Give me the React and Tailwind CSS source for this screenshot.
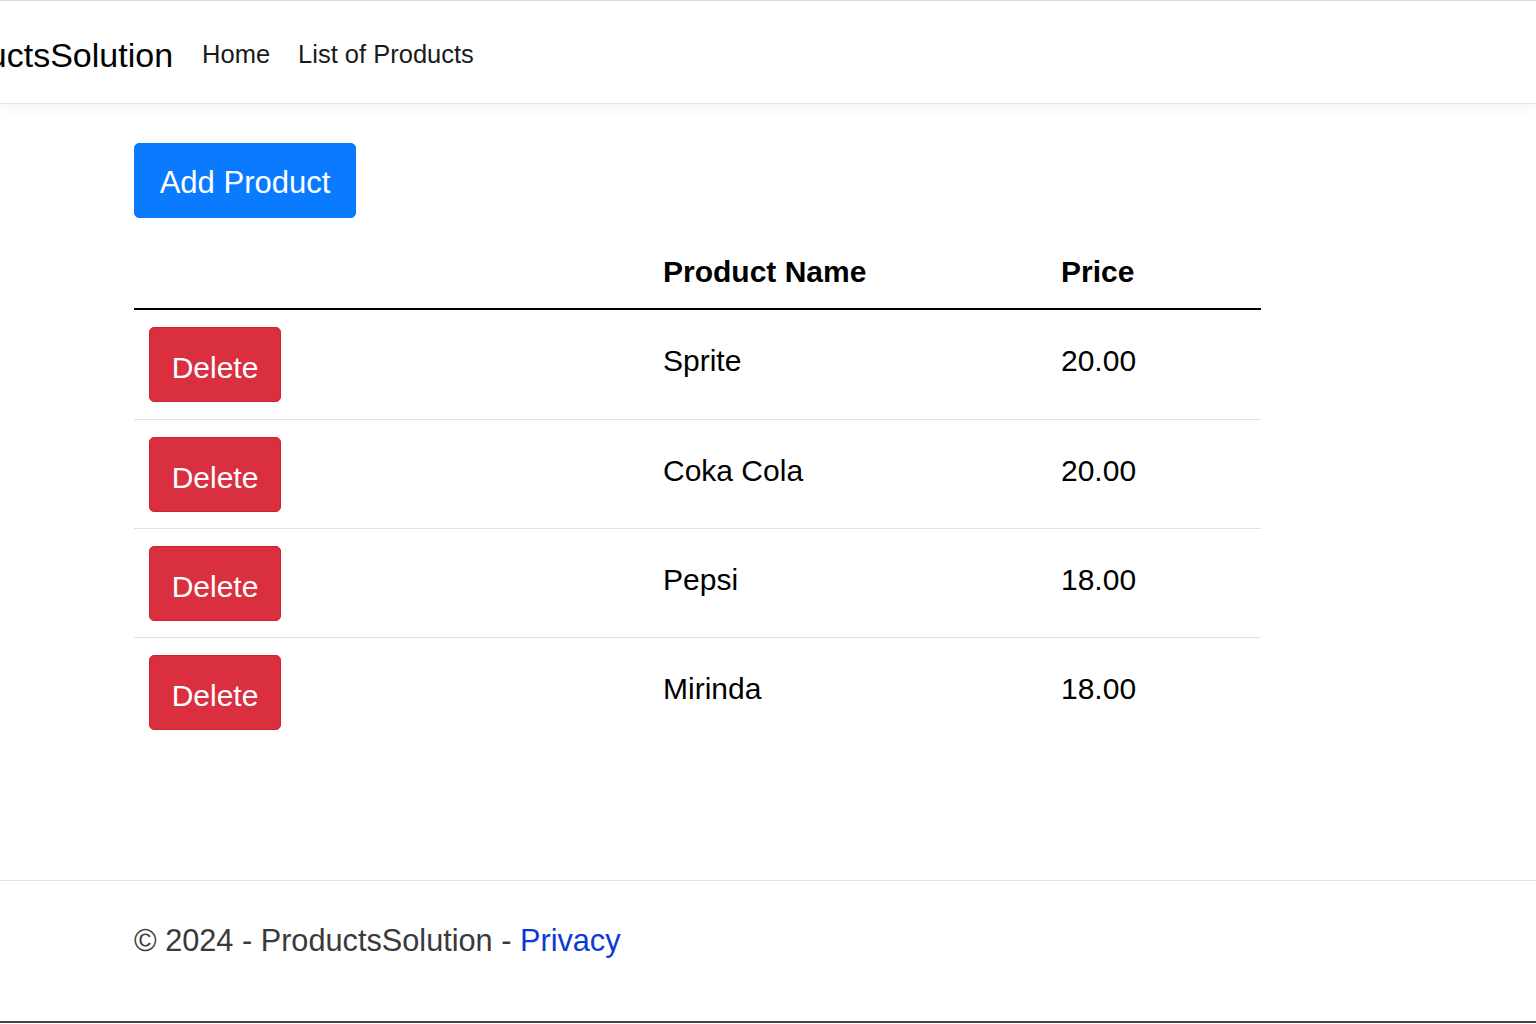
import React from "react";

const products = [
    { id: 1, name: "Sprite", price: "20.00" },
    { id: 2, name: "Coka Cola", price: "20.00" },
    { id: 3, name: "Pepsi", price: "18.00" },
    { id: 4, name: "Mirinda", price: "18.00" },
];

export default function App() {
    return (
        <div className="min-h-[1024px] bg-white text-[#212529] font-['Liberation_Sans',Arial,sans-serif] flex flex-col overflow-hidden">
            {/* --- NAVBAR --- */}
            <header className="h-[104px] pt-[5px] border-t border-t-[#dcdcdc] border-b border-b-[#e3e3e3] shadow-[0_4px_12px_rgba(0,0,0,0.05)] bg-white flex items-center">
                <a className="ml-[-84px] text-[34px] text-black whitespace-nowrap leading-none">ProductsSolution</a>
                <nav className="flex items-center gap-[28px] ml-[29px] text-[25.5px] text-[#1a1a1a] leading-none">
                    <a>Home</a>
                    <a>List of Products</a>
                </nav>
            </header>

            {/* --- CONTENT --- */}
            <main className="pl-[134px] pt-[39px] pb-[134px]">
                <button className="w-[222px] h-[75px] pt-[5px] bg-[#0a7bff] text-white text-[31px] rounded-[5px] border border-[#0a7bff]">
                    Add Product
                </button>

                <div className="w-[1127px] mt-[17px]">
                    <div className="grid grid-cols-[514px_398px_215px] border-b-2 border-black text-[30px] font-bold leading-[45px] text-black">
                        <div className="pt-[14px] pb-[14px] px-[15px]"></div>
                        <div className="pt-[14px] pb-[14px] px-[15px]">Product Name</div>
                        <div className="pt-[14px] pb-[14px] px-[15px]">Price</div>
                    </div>

                    {products.map((p, i) => (
                        <div
                            key={p.id}
                            className={`grid grid-cols-[514px_398px_215px] h-[109px] text-[30px] leading-[45px] text-black ${i > 0 ? "border-t border-[#dee2e6]" : ""}`}
                        >
                            <div className="pt-[17px] px-[15px]">
                                <button className="w-[132px] h-[75px] pt-[5px] bg-[#d92f3f] border border-[#cf2333] text-white text-[30px] rounded-[5px]">
                                    Delete
                                </button>
                            </div>
                            <div className="pt-[28px] px-[15px]">{p.name}</div>
                            <div className="pt-[28px] px-[15px]">{p.price}</div>
                        </div>
                    ))}
                </div>
            </main>

            {/* --- FOOTER --- */}
            <footer className="border-t border-[#dee2e6] h-[143px] pt-[45px] pl-[134px] border-b-2 border-b-[#444] text-[30.7px] text-[#3a3a3a] leading-none">
                <span>
                    © 2024 - ProductsSolution - <a className="text-[#0a3bd6]">Privacy</a>
                </span>
            </footer>
        </div>
    );
}
